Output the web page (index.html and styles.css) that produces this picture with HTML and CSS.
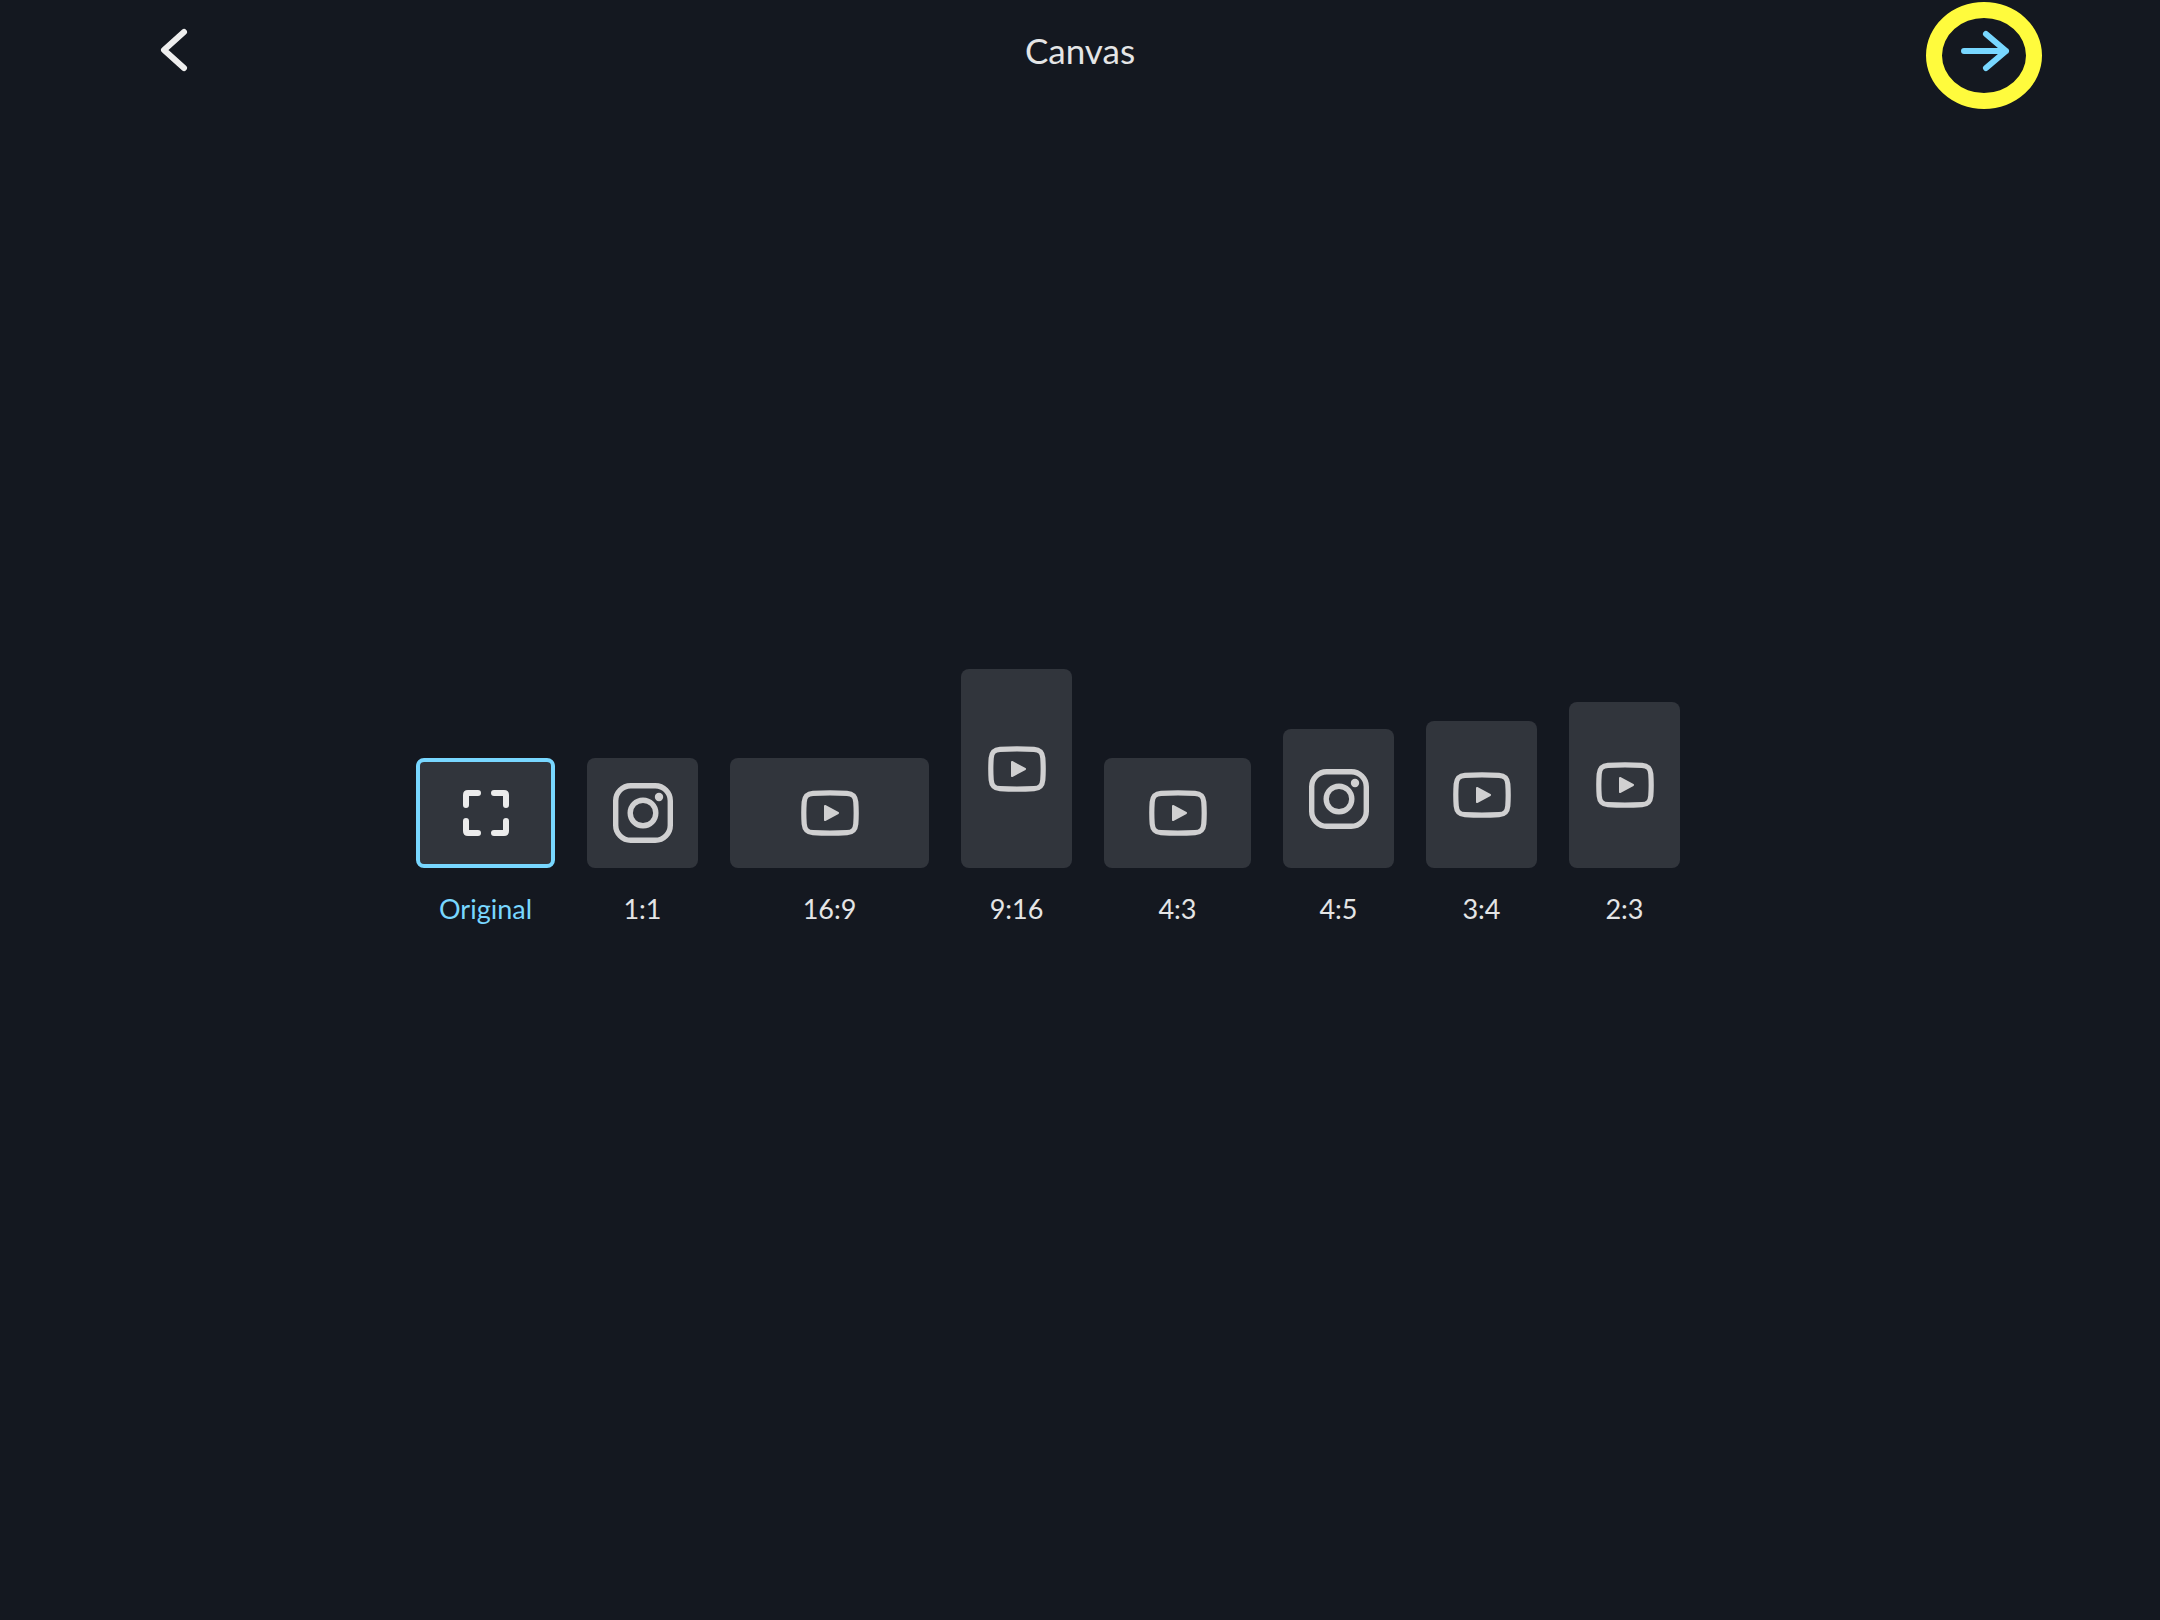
FILE: index.html
```html
<!DOCTYPE html>
<html lang="en">
<head>
    <meta charset="UTF-8">
    <meta name="viewport" content="width=device-width, initial-scale=1.0">
    <title>Canvas</title>
    <link rel="stylesheet" href="styles.css">
</head>
<body>
    <!-- Shared icons -->
    <svg class="icon-defs" aria-hidden="true">
        <symbol id="icon-original" viewBox="0 0 46 46">
            <path d="M3 15V5Q3 3 5 3H15M31 3H41Q43 3 43 5V15M43 31V41Q43 43 41 43H31M15 43H5Q3 43 3 41V31" fill="none" stroke="#ececec" stroke-width="6" stroke-linecap="round"/>
        </symbol>
        <symbol id="icon-instagram" viewBox="0 0 60 60">
            <rect x="2.7" y="2.7" width="54.6" height="54.6" rx="15" fill="none" stroke="#d0d0d1" stroke-width="5.4"/>
            <circle cx="30" cy="30" r="12.8" fill="none" stroke="#d0d0d1" stroke-width="5.4"/>
            <circle cx="46" cy="14" r="4.2" fill="#d0d0d1"/>
        </symbol>
        <symbol id="icon-youtube" viewBox="0 0 58 46">
            <path d="M12 3.300Q29 2.300 46 3.300C52 3.700 54.300 6.500 54.800 12Q55.600 23 54.800 34C54.300 39.500 52 42.300 46 42.700Q29 43.700 12 42.700C6 42.300 3.700 39.500 3.200 34Q2.400 23 3.200 12C3.700 6.500 6 3.700 12 3.300Z" fill="none" stroke="#d0d0d1" stroke-width="5.2"/>
            <path d="M24 16L37 23L24 30Z" fill="#d0d0d1" stroke="#d0d0d1" stroke-width="2" stroke-linejoin="round"/>
        </symbol>
    </svg>

    <header class="topbar">
        <button type="button" class="nav-button" aria-label="Back">
            <svg width="64" height="64" viewBox="0 0 64 64" aria-hidden="true">
                <path d="M41 14L21 32L41 50" fill="none" stroke="#eeeeee" stroke-width="6" stroke-linecap="round" stroke-linejoin="round"/>
            </svg>
        </button>
        <h1 class="title">Canvas</h1>
        <button type="button" class="nav-button next" aria-label="Next">
            <svg width="64" height="64" viewBox="0 0 64 64" aria-hidden="true">
                <path d="M11 33H53M33 16L53 33L33 50" fill="none" stroke="#78d7ff" stroke-width="6" stroke-linecap="round" stroke-linejoin="round"/>
            </svg>
            <span class="ring"></span>
        </button>
    </header>

    <main class="content">
        <div class="ratios" role="radiogroup" aria-label="Canvas">
            <label class="ratio">
                <span class="tile tile-original">
                    <input type="radio" name="ratio" value="original" checked>
                    <svg width="46" height="46" aria-hidden="true"><use href="#icon-original"/></svg>
                </span>
                <span class="name">Original</span>
            </label>
            <label class="ratio">
                <span class="tile">
                    <input type="radio" name="ratio" value="1:1">
                    <svg width="60" height="60" aria-hidden="true"><use href="#icon-instagram"/></svg>
                </span>
                <span class="name">1:1</span>
            </label>
            <label class="ratio">
                <span class="tile tile-16-9">
                    <input type="radio" name="ratio" value="16:9">
                    <svg width="58" height="46" aria-hidden="true"><use href="#icon-youtube"/></svg>
                </span>
                <span class="name">16:9</span>
            </label>
            <label class="ratio">
                <span class="tile tile-9-16">
                    <input type="radio" name="ratio" value="9:16">
                    <svg width="58" height="46" aria-hidden="true"><use href="#icon-youtube"/></svg>
                </span>
                <span class="name">9:16</span>
            </label>
            <label class="ratio">
                <span class="tile tile-4-3">
                    <input type="radio" name="ratio" value="4:3">
                    <svg width="58" height="46" aria-hidden="true"><use href="#icon-youtube"/></svg>
                </span>
                <span class="name">4:3</span>
            </label>
            <label class="ratio">
                <span class="tile tile-4-5">
                    <input type="radio" name="ratio" value="4:5">
                    <svg width="60" height="60" aria-hidden="true"><use href="#icon-instagram"/></svg>
                </span>
                <span class="name">4:5</span>
            </label>
            <label class="ratio">
                <span class="tile tile-3-4">
                    <input type="radio" name="ratio" value="3:4">
                    <svg width="58" height="46" aria-hidden="true"><use href="#icon-youtube"/></svg>
                </span>
                <span class="name">3:4</span>
            </label>
            <label class="ratio">
                <span class="tile tile-2-3">
                    <input type="radio" name="ratio" value="2:3">
                    <svg width="58" height="46" aria-hidden="true"><use href="#icon-youtube"/></svg>
                </span>
                <span class="name">2:3</span>
            </label>
        </div>
    </main>
</body>
</html>
```

FILE: styles.css
```css
* {
    margin: 0;
    padding: 0;
    box-sizing: border-box;
}

body {
    font-family: Avenir, Lato, sans-serif;
    background: #141820;
    color: #e4e5e6;
    min-height: 100vh;
    display: flex;
    flex-direction: column;
}

.icon-defs {
    display: none;
}

.topbar {
    display: flex;
    align-items: center;
    justify-content: space-between;
    height: 100px;
    padding: 0 143px;
}

.title {
    font-size: 35px;
    font-weight: 400;
    line-height: 44px;
}

.nav-button {
    position: relative;
    width: 64px;
    height: 64px;
    background: none;
    border: none;
    cursor: pointer;
}

.nav-button svg {
    display: block;
}

/* highlight around the next arrow */
.ring {
    position: absolute;
    top: -16px;
    left: -27px;
    width: 116px;
    height: 107px;
    border: 16px solid #fffb3d;
    border-radius: 50%;
    pointer-events: none;
}

.content {
    flex: 1;
    display: flex;
    align-items: center;
    justify-content: center;
    padding-bottom: 124px;
}

.ratios {
    display: flex;
    align-items: flex-end;
    gap: 32px;
    padding-right: 64px;
}

.ratio {
    display: flex;
    flex-direction: column;
    align-items: center;
    gap: 23px;
    cursor: pointer;
}

.tile {
    display: grid;
    place-items: center;
    width: 111px;
    height: 110px;
}

.tile input,
.tile svg {
    grid-area: 1 / 1;
}

.tile svg {
    z-index: 1;
    pointer-events: none;
}

.tile input {
    appearance: none;
    width: 100%;
    height: 100%;
    background: #31353c;
    border-radius: 8px;
    cursor: pointer;
}

.tile input:checked {
    border: 4px solid #78d7ff;
}

.tile-original {
    width: 139px;
}

.tile-16-9 {
    width: 199px;
}

.tile-9-16 {
    height: 199px;
}

.tile-4-3 {
    width: 147px;
}

.tile-4-5 {
    height: 139px;
}

.tile-3-4 {
    height: 147px;
}

.tile-2-3 {
    height: 166px;
}

.name {
    font-size: 27px;
    line-height: 36px;
}

.tile:has(input:checked) + .name {
    color: #78d7ff;
}
```
